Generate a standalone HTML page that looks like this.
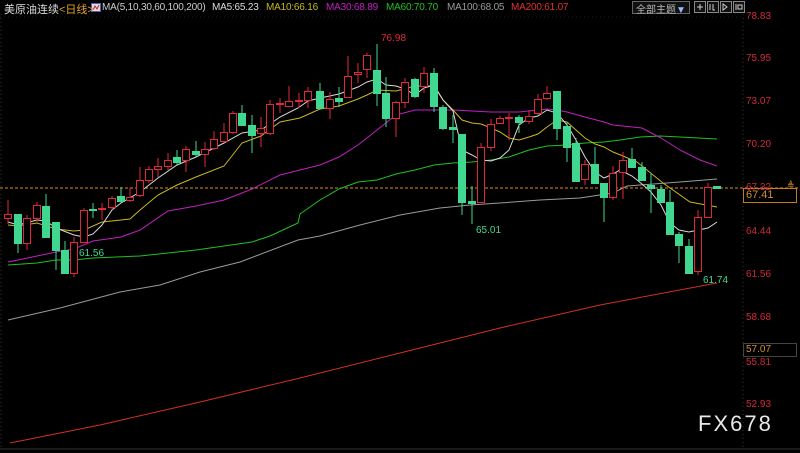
<!DOCTYPE html>
<html><head><meta charset="utf-8"><style>
html,body{margin:0;padding:0;background:#000;}
body{width:800px;height:453px;overflow:hidden;position:relative;font-family:"Liberation Sans","Noto Sans CJK SC",sans-serif;}
.t{position:absolute;font-size:11px;white-space:nowrap;}
.h{position:absolute;top:2px;font-size:10px;white-space:nowrap;letter-spacing:-0.2px;}
.ax{position:absolute;left:746px;font-size:10px;color:#d0283c;}
</style></head><body>
<svg width="800" height="453" style="position:absolute;left:0;top:0">
<line x1="1" y1="14" x2="1" y2="449" stroke="#333" stroke-dasharray="1,3"/>
<line x1="743" y1="14" x2="743" y2="449" stroke="#333" stroke-dasharray="1,3"/>
<line x1="0" y1="17" x2="743" y2="17" stroke="#222" stroke-dasharray="1,3"/>
<line x1="0" y1="449" x2="800" y2="449" stroke="#333"/>
<line x1="0" y1="188" x2="800" y2="188" stroke="#e08a20" stroke-dasharray="3,2"/>
<g fill="none" stroke-width="1">
<polyline stroke="#d03020" points="10,443 100,425 200,402 300,378 400,353 500,328 600,305 717,283"/>
<polyline stroke="#9a9a9a" points="8,320 60,308 120,292 160,285 200,272 240,262 298,240 320,236 360,225 400,215 440,208 470,205 500,203 540,200 580,198 613,193 627,186 680,182 717,179"/>
<polyline stroke="#20c020" points="8,265 37,263 56,260 74,260 93,258 140,256 168,253 196,250 224,246 252,242 270,236 298,223 300,214 320,200 339,189 358,182 377,180 396,174 415,170 434,165 453,163 472,162 491,160 509,157 529,150 547,146 567,145 585,143 604,142 620,140 640,137 660,136 680,137 717,139"/>
<polyline stroke="#c020c0" points="8,262 18,260 37,256 56,252 74,249 93,241 121,237 140,230 168,211 196,206 224,200 252,189 280,175 300,170 320,165 339,157 358,145 377,130 396,115 415,110 434,110 453,110 472,111 491,112 519,112 538,110 547,109 557,110 567,112 585,117 604,122 613,125 642,128 661,138 680,150 700,160 717,166"/>
<polyline stroke="#c8b820" points="8,225 18,226 37,223 56,229 74,231 84,230 102,222 121,220 130,219 140,210 158,195 177,185 196,177 224,166 242,143 261,136 280,122 300,118 320,109 339,106 358,99 367,95 377,90 396,91 415,86 434,86 443,100 453,110 462,120 472,123 481,124 491,128 500,132 509,138 519,140 529,137 538,134 547,127 557,120 567,122 576,130 585,138 595,144 604,147 613,152 623,156 637,162 663,183 690,202 717,207"/>
<polyline stroke="#d8d8d8" points="8,222 18,225 37,220 46,221 56,228 74,235 84,237 93,234 102,225 112,210 121,203 140,192 158,178 177,165 196,157 224,143 242,133 261,130 280,117 298,108 308,101 320,98 339,94 358,87 367,82 377,79 386,85 396,86 405,89 415,95 424,88 434,85 443,100 453,111 462,150 472,155 481,160 491,161 500,158 509,150 519,125 529,118 538,116 547,110 557,113 567,125 576,140 585,157 595,172 604,178 613,174 620,170 632,176 642,184 651,192 661,205 670,223 679,230 689,232 698,230 708,228 717,222"/>
</g>
<g stroke-width="1">
<g stroke="#e0283c" fill="#000">
<line x1="8" y1="200" x2="8" y2="224"/><rect x="4.5" y="214.5" width="7" height="4"/>
<line x1="27" y1="215" x2="27" y2="250"/><rect x="23.5" y="218.5" width="7" height="25"/>
<line x1="37" y1="202" x2="37" y2="222"/><rect x="33.5" y="205.5" width="7" height="13"/>
<line x1="74" y1="237" x2="74" y2="277"/><rect x="70.5" y="242.5" width="7" height="31"/>
<line x1="84" y1="208" x2="84" y2="242"/><rect x="80.5" y="210.5" width="7" height="32"/>
<line x1="102" y1="203" x2="102" y2="220"/><rect x="98.5" y="208.5" width="7" height="1"/>
<line x1="112" y1="196" x2="112" y2="210"/><rect x="108.5" y="198.5" width="7" height="9"/>
<line x1="130" y1="188" x2="130" y2="202"/><rect x="126.5" y="197.5" width="7" height="3"/>
<line x1="140" y1="167" x2="140" y2="197"/><rect x="136.5" y="180.5" width="7" height="15"/>
<line x1="149" y1="166" x2="149" y2="183"/><rect x="145.5" y="169.5" width="7" height="11"/>
<line x1="158" y1="158" x2="158" y2="177"/><rect x="154.5" y="166.5" width="7" height="3"/>
<line x1="168" y1="153" x2="168" y2="170"/><rect x="164.5" y="160.5" width="7" height="6"/>
<line x1="186" y1="146" x2="186" y2="172"/><rect x="182.5" y="149.5" width="7" height="11"/>
<line x1="205" y1="142" x2="205" y2="167"/><rect x="201.5" y="149.5" width="7" height="5"/>
<line x1="214" y1="131" x2="214" y2="150"/><rect x="210.5" y="139.5" width="7" height="9"/>
<line x1="224" y1="123" x2="224" y2="143"/><rect x="220.5" y="132.5" width="7" height="9"/>
<line x1="233" y1="111" x2="233" y2="134"/><rect x="229.5" y="113.5" width="7" height="19"/>
<line x1="261" y1="117" x2="261" y2="147"/><rect x="257.5" y="128.5" width="7" height="5"/>
<line x1="270" y1="100" x2="270" y2="135"/><rect x="266.5" y="104.5" width="7" height="29"/>
<line x1="280" y1="98" x2="280" y2="113"/><rect x="276.5" y="103.5" width="7" height="1"/>
<line x1="289" y1="86" x2="289" y2="107"/><rect x="285.5" y="101.5" width="7" height="5"/>
<line x1="299" y1="93" x2="299" y2="108"/><rect x="295.5" y="100.5" width="7" height="1"/>
<line x1="308" y1="87" x2="308" y2="108"/><rect x="304.5" y="91.5" width="7" height="9"/>
<line x1="330" y1="92" x2="330" y2="119"/><rect x="326.5" y="99.5" width="7" height="9"/>
<line x1="348" y1="56" x2="348" y2="98"/><rect x="344.5" y="76.5" width="7" height="21"/>
<line x1="358" y1="63" x2="358" y2="83"/><rect x="354.5" y="72.5" width="7" height="2"/>
<line x1="367" y1="53" x2="367" y2="78"/><rect x="363.5" y="55.5" width="7" height="14"/>
<line x1="396" y1="101" x2="396" y2="137"/><rect x="392.5" y="102.5" width="7" height="16"/>
<line x1="405" y1="78" x2="405" y2="108"/><rect x="401.5" y="82.5" width="7" height="20"/>
<line x1="424" y1="67" x2="424" y2="93"/><rect x="420.5" y="73.5" width="7" height="13"/>
<line x1="481" y1="143" x2="481" y2="203"/><rect x="477.5" y="147.5" width="7" height="55"/>
<line x1="491" y1="119" x2="491" y2="151"/><rect x="487.5" y="124.5" width="7" height="23"/>
<line x1="500" y1="116" x2="500" y2="124"/><rect x="496.5" y="118.5" width="7" height="5"/>
<line x1="509" y1="113" x2="509" y2="140"/><rect x="505.5" y="117.5" width="7" height="1"/>
<line x1="529" y1="110" x2="529" y2="124"/><rect x="525.5" y="116.5" width="7" height="5"/>
<line x1="538" y1="94" x2="538" y2="115"/><rect x="534.5" y="99.5" width="7" height="14"/>
<line x1="547" y1="86" x2="547" y2="100"/><rect x="543.5" y="93.5" width="7" height="5"/>
<line x1="585" y1="160" x2="585" y2="185"/><rect x="581.5" y="164.5" width="7" height="15"/>
<line x1="613" y1="166" x2="613" y2="200"/><rect x="609.5" y="173.5" width="7" height="24"/>
<line x1="623" y1="152" x2="623" y2="199"/><rect x="619.5" y="160.5" width="7" height="12"/>
<line x1="698" y1="210" x2="698" y2="275"/><rect x="694.5" y="217.5" width="7" height="54"/>
<line x1="708" y1="183" x2="708" y2="218"/><rect x="704.5" y="187.5" width="7" height="30"/>
</g>
<g stroke="#40d890" fill="#40d890">
<line x1="18" y1="214" x2="18" y2="253"/><rect x="14.5" y="214.5" width="7" height="29"/>
<line x1="46" y1="194" x2="46" y2="237"/><rect x="42.5" y="206.5" width="7" height="31"/>
<line x1="56" y1="222" x2="56" y2="270"/><rect x="52.5" y="222.5" width="7" height="28"/>
<line x1="65" y1="241" x2="65" y2="274"/><rect x="61.5" y="250.5" width="7" height="23"/>
<line x1="93" y1="203" x2="93" y2="218"/><rect x="89.5" y="209.5" width="7" height="1"/>
<line x1="121" y1="187" x2="121" y2="203"/><rect x="117.5" y="196.5" width="7" height="5"/>
<line x1="177" y1="150" x2="177" y2="165"/><rect x="173.5" y="157.5" width="7" height="5"/>
<line x1="196" y1="141" x2="196" y2="157"/><rect x="192.5" y="151.5" width="7" height="3"/>
<line x1="242" y1="105" x2="242" y2="125"/><rect x="238.5" y="113.5" width="7" height="12"/>
<line x1="252" y1="115" x2="252" y2="153"/><rect x="248.5" y="125.5" width="7" height="10"/>
<line x1="320" y1="83" x2="320" y2="108"/><rect x="316.5" y="91.5" width="7" height="17"/>
<line x1="339" y1="87" x2="339" y2="107"/><rect x="335.5" y="98.5" width="7" height="3"/>
<line x1="377" y1="44" x2="377" y2="106"/><rect x="373.5" y="70.5" width="7" height="23"/>
<line x1="386" y1="77" x2="386" y2="127"/><rect x="382.5" y="93.5" width="7" height="25"/>
<line x1="415" y1="78" x2="415" y2="98"/><rect x="411.5" y="79.5" width="7" height="17"/>
<line x1="434" y1="68" x2="434" y2="112"/><rect x="430.5" y="73.5" width="7" height="33"/>
<line x1="443" y1="105" x2="443" y2="130"/><rect x="439.5" y="107.5" width="7" height="21"/>
<line x1="453" y1="115" x2="453" y2="143"/><rect x="449.5" y="127.5" width="7" height="2"/>
<line x1="462" y1="134" x2="462" y2="215"/><rect x="458.5" y="134.5" width="7" height="68"/>
<line x1="472" y1="186" x2="472" y2="224"/><rect x="468.5" y="201.5" width="7" height="2"/>
<line x1="519" y1="115" x2="519" y2="133"/><rect x="515.5" y="117.5" width="7" height="5"/>
<line x1="557" y1="91" x2="557" y2="140"/><rect x="553.5" y="91.5" width="7" height="37"/>
<line x1="567" y1="123" x2="567" y2="162"/><rect x="563.5" y="126.5" width="7" height="21"/>
<line x1="576" y1="138" x2="576" y2="182"/><rect x="572.5" y="143.5" width="7" height="38"/>
<line x1="595" y1="147" x2="595" y2="184"/><rect x="591.5" y="164.5" width="7" height="19"/>
<line x1="604" y1="183" x2="604" y2="222"/><rect x="600.5" y="183.5" width="7" height="14"/>
<line x1="632" y1="148" x2="632" y2="168"/><rect x="628.5" y="159.5" width="7" height="8"/>
<line x1="642" y1="162" x2="642" y2="181"/><rect x="638.5" y="167.5" width="7" height="13"/>
<line x1="651" y1="173" x2="651" y2="213"/><rect x="647.5" y="185.5" width="7" height="3"/>
<line x1="661" y1="185" x2="661" y2="203"/><rect x="657.5" y="189.5" width="7" height="13"/>
<line x1="670" y1="190" x2="670" y2="234"/><rect x="666.5" y="202.5" width="7" height="32"/>
<line x1="679" y1="232" x2="679" y2="263"/><rect x="675.5" y="234.5" width="7" height="11"/>
<line x1="689" y1="239" x2="689" y2="273"/><rect x="685.5" y="246.5" width="7" height="27"/>
<line x1="717" y1="186" x2="717" y2="189"/><rect x="713.5" y="186.5" width="7" height="2"/>
</g>
<rect x="743.5" y="188.5" width="53" height="14" fill="#000" stroke="#c87a20"/>
<rect x="743.5" y="343.5" width="53" height="13" fill="#000" stroke="#444"/>
<rect x="632.5" y="1.5" width="57" height="12" fill="#111" stroke="#666"/>
<rect x="694.5" y="1.5" width="11" height="11" fill="#111" stroke="#888"/>
<rect x="707.5" y="1.5" width="11" height="11" fill="#111" stroke="#888"/>
<rect x="720.5" y="1.5" width="11" height="11" fill="#111" stroke="#888"/>
<rect x="733.5" y="1.5" width="11" height="11" fill="#111" stroke="#888"/>
<path d="M697 7h6M700 4v6M710 4v6M713 4v6h2M723 4v6l4-3z M736 4v6M738 5h4v4h-4z" stroke="#ccc" fill="none"/>
<rect x="91.5" y="3.5" width="9" height="8" fill="#ddd" stroke="#5060c0"/>
<polyline points="93,10 95,6 97,9 99,5" fill="none" stroke="#d02020"/>
</g>
</svg>
<div class="t" style="left:4px;top:1px;color:#ddd">美原油连续<span style="color:#e0a030">&lt;日线&gt;</span></div>
<div class="h" style="left:102px;color:#ccc">MA(5,10,30,60,100,200)</div>
<div class="h" style="left:212px;color:#ddd">MA5:65.23</div>
<div class="h" style="left:266px;color:#c8b820">MA10:66.16</div>
<div class="h" style="left:326px;color:#c020c0">MA30:68.89</div>
<div class="h" style="left:386px;color:#20c020">MA60:70.70</div>
<div class="h" style="left:447px;color:#9a9a9a">MA100:68.05</div>
<div class="h" style="left:511px;color:#e03030">MA200:61.07</div>
<div class="t" style="left:636px;top:1px;color:#bbb;font-size:10px">全部主题<span style="color:#9bf">▼</span></div>
<div class="ax" style="top:11px">78.83</div>
<div class="ax" style="top:53px">75.95</div>
<div class="ax" style="top:96px">73.07</div>
<div class="ax" style="top:139px">70.20</div>
<div class="ax" style="top:182px">67.32</div>
<div class="ax" style="top:189px;color:#d09030;font-size:11px">67.41</div>
<div class="ax" style="top:226px">64.44</div>
<div class="ax" style="top:269px">61.56</div>
<div class="ax" style="top:312px">58.68</div>
<div class="ax" style="top:344px;color:#d09030">57.07</div>
<div class="ax" style="top:357px">55.81</div>
<div class="ax" style="top:399px">52.93</div>
<div class="t" style="left:381px;top:33px;color:#e0283c;font-size:10px">76.98</div>
<div class="t" style="left:476px;top:225px;color:#40d890;font-size:10px">65.01</div>
<div class="t" style="left:79px;top:248px;color:#40d890;font-size:10px">61.56</div>
<div class="t" style="left:703px;top:275px;color:#40d890;font-size:10px">61.74</div>
<div class="t" style="left:698px;top:411px;color:#e8e8e8;font-size:22px;letter-spacing:2px">FX678</div>
<div class="t" style="left:787px;top:180px;color:#e0a030;font-size:9px">≜</div>
</body></html>
